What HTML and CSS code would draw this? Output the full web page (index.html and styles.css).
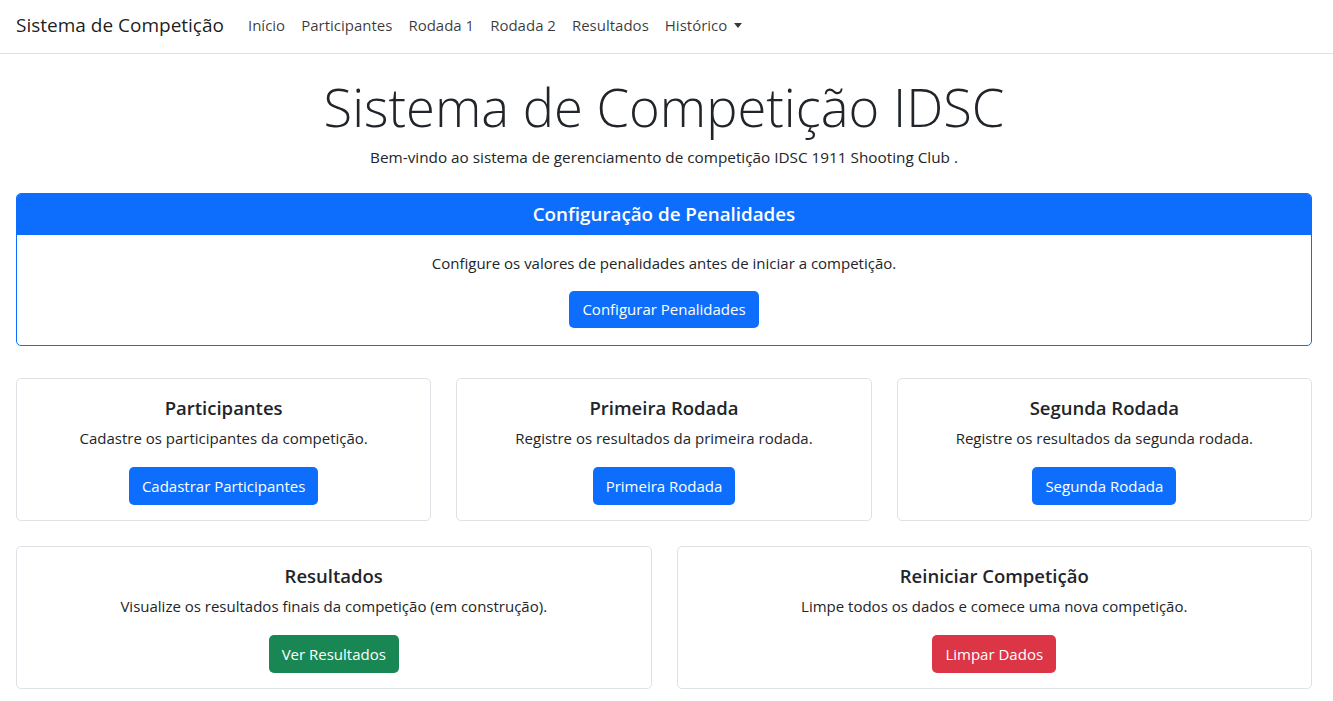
FILE: index.html
```html
<!DOCTYPE html>
<html lang="pt-BR">
<head>
<meta charset="utf-8">
<title>Sistema de Competição IDSC</title>
<link rel="stylesheet" href="styles.css">
</head>
<body>
<nav class="navbar">
  <a class="brand" href="#">Sistema de Competição</a>
  <ul class="nav">
    <li><a class="nav-link" href="#">Início</a></li>
    <li><a class="nav-link" href="#">Participantes</a></li>
    <li><a class="nav-link" href="#">Rodada 1</a></li>
    <li><a class="nav-link" href="#">Rodada 2</a></li>
    <li><a class="nav-link" href="#">Resultados</a></li>
    <li><a class="nav-link dropdown-toggle" href="#">Histórico</a></li>
  </ul>
</nav>
<main class="container">
  <h1 class="display">Sistema de Competição IDSC</h1>
  <p class="lead">Bem-vindo ao sistema de gerenciamento de competição IDSC 1911 Shooting Club .</p>

  <section class="card card-primary">
    <div class="card-header">Configuração de Penalidades</div>
    <div class="card-body body-main">
      <p class="card-text">Configure os valores de penalidades antes de iniciar a competição.</p>
      <a class="btn btn-primary" href="#">Configurar Penalidades</a>
    </div>
  </section>

  <div class="grid grid-3">
    <section class="card">
      <div class="card-body">
        <h5 class="card-title">Participantes</h5>
        <p class="card-text">Cadastre os participantes da competição.</p>
        <a class="btn btn-primary" href="#">Cadastrar Participantes</a>
      </div>
    </section>
    <section class="card">
      <div class="card-body">
        <h5 class="card-title">Primeira Rodada</h5>
        <p class="card-text">Registre os resultados da primeira rodada.</p>
        <a class="btn btn-primary" href="#">Primeira Rodada</a>
      </div>
    </section>
    <section class="card">
      <div class="card-body">
        <h5 class="card-title">Segunda Rodada</h5>
        <p class="card-text">Registre os resultados da segunda rodada.</p>
        <a class="btn btn-primary" href="#">Segunda Rodada</a>
      </div>
    </section>
  </div>

  <div class="grid grid-2">
    <section class="card">
      <div class="card-body">
        <h5 class="card-title">Resultados</h5>
        <p class="card-text">Visualize os resultados finais da competição (em construção).</p>
        <a class="btn btn-success" href="#">Ver Resultados</a>
      </div>
    </section>
    <section class="card">
      <div class="card-body">
        <h5 class="card-title">Reiniciar Competição</h5>
        <p class="card-text">Limpe todos os dados e comece uma nova competição.</p>
        <a class="btn btn-danger" href="#">Limpar Dados</a>
      </div>
    </section>
  </div>
</main>
</body>
</html>
```

FILE: styles.css
```css
* { box-sizing: border-box; }

html, body {
  margin: 0;
  padding: 0;
  background: #fff;
}

body {
  font-family: "Open Sans", "Noto Sans", "Liberation Sans", sans-serif;
  font-size: 15px;
  color: #212529;
}

a { text-decoration: none; }

.navbar {
  display: flex;
  align-items: center;
  height: 54px;
  padding: 0 16px;
  border-bottom: 1px solid #dee2e6;
  background: #fff;
}

.brand {
  font-size: 19px;
  color: rgba(0, 0, 0, 0.9);
  margin-right: 16px;
  line-height: 28px;
  padding-bottom: 3px;
}

.nav {
  display: flex;
  list-style: none;
  margin: 0;
  padding: 0;
}

.nav-link {
  display: block;
  padding: 0 8px 3px;
  font-size: 15px;
  line-height: 22px;
  color: rgba(0, 0, 0, 0.78);
}

.dropdown-toggle::after {
  content: "";
  display: inline-block;
  margin-left: 7px;
  vertical-align: 3px;
  border-top: 5px solid rgba(0, 0, 0, 0.78);
  border-left: 4px solid transparent;
  border-right: 4px solid transparent;
}

.container {
  padding: 18px 21px 20px 16px;
}

.display {
  margin: 0;
  font-size: 52.5px;
  font-weight: 300;
  line-height: 70px;
  text-align: center;
  color: #212529;
}

.lead {
  margin: 4px 0 25px;
  font-size: 15.3px;
  line-height: 22px;
  text-align: center;
}

.card {
  border: 1px solid #dee2e6;
  border-radius: 5px;
  background: #fff;
  text-align: center;
}

.card-primary {
  border-color: #0d6efd;
  overflow: hidden;
}

.card-header {
  background: #0d6efd;
  color: #fff;
  font-size: 18.8px;
  font-weight: 600;
  height: 41px;
  line-height: 40px;
}

.card-body {
  display: flex;
  flex-direction: column;
  align-items: center;
  padding: 16px 16px 15px;
}

.body-main {
  padding: 17px 16px 17px;
}

.card-title {
  margin: 0;
  font-size: 18.5px;
  font-weight: 600;
  line-height: 26px;
}

.card-text {
  margin: 6px 0 18px;
  line-height: 22px;
}

.body-main .card-text {
  margin: 0 0 17px;
}

.btn {
  display: inline-flex;
  align-items: center;
  justify-content: center;
  height: 38px;
  padding: 0 13px 1px;
  border-radius: 5px;
  color: #fff;
  font-size: 15px;
  line-height: 22px;
}

.body-main .btn { height: 37px; }

.btn-primary { background: #0d6efd; }
.btn-success { background: #198754; }
.btn-danger { background: #dc3545; }

.grid {
  display: grid;
  gap: 25px;
}

.grid-3 {
  grid-template-columns: repeat(3, 1fr);
  margin-top: 32px;
}

.grid-2 {
  grid-template-columns: repeat(2, 1fr);
  margin-top: 25px;
}
```
